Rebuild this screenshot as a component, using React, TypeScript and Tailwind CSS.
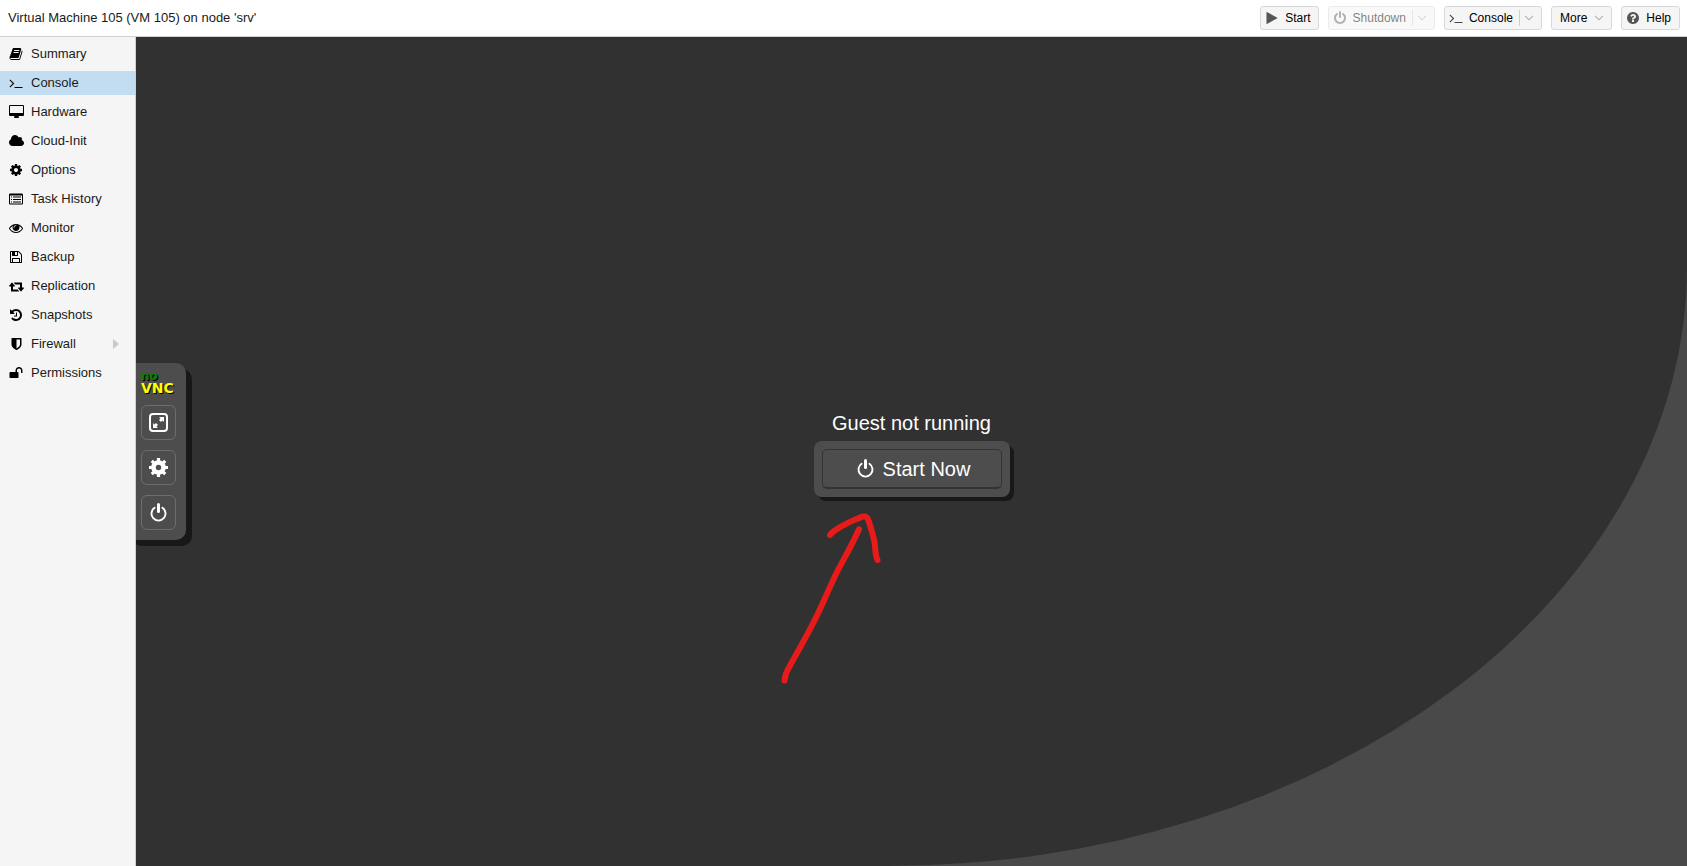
import type { ReactNode } from "react";

type IconProps = { d: string; wide?: boolean; className?: string };

const paths = {
  book: "M1703 478q40 57 18 129l-275 906q-19 64-76.5 107.5t-122.5 43.5h-923q-77 0-148.5-53.5t-99.5-131.5q-24-67-2-127 0-4 3-27t4-37q1-8-3-21.5t-3-19.5q2-11 8-21t16.500-23.500 16.500-23.500q23-38 45-91.500t30-91.500q3-10 .5-30t-.5-28q3-11 17-28t17-23q21-36 42-92t25-90q1-9-2.500-32t.5-28q4-13 22-30.500t22-22.500q19-26 42.500-84.500t27.500-96.500q1-8-3-25.500t-2-26.500q2-8 9-18t18-23 17-21q8-12 16.500-30.500t15-35 16-36 19.500-32 26.500-23.500 36-11.500 47.500 5.500l-1 3q38-9 51-9h761q74 0 114 56t18 130l-274 906q-36 119-71.500 153.500t-128.500 34.500h-869q-27 0-38 15-11 16-1 43 24 70 144 70h923q29 0 56-15.500t35-41.500l300-987q7-22 5-57 38 15 59 43zm-1064 2q-4 13 2 22.500t20 9.500h608q13 0 25.500-9.500t16.500-22.500l21-64q4-13-2-22.500t-20-9.500h-608q-13 0-25.500 9.500t-16.500 22.500zm-83 256q-4 13 2 22.500t20 9.500h608q13 0 25.500-9.500t16.500-22.500l21-64q4-13-2-22.500t-20-9.500h-608q-13 0-25.500 9.500t-16.500 22.500z",
  terminal:
    "M649 983l-466 466q-10 10-23 10t-23-10l-50-50q-10-10-10-23t10-23l393-393-393-393q-10-10-10-23t10-23l50-50q10-10 23-10t23 10l466 466q10 10 10 23t-10 23zm1079 457v64q0 14-9 23t-23 9h-960q-14 0-23-9t-9-23v-64q0-14 9-23t23-9h960q14 0 23 9t9 23z",
  desktop:
    "M1728 992v-832q0-13-9.5-22.5t-22.5-9.5h-1600q-13 0-22.5 9.5t-9.5 22.5v832q0 13 9.5 22.5t22.5 9.5h1600q13 0 22.5-9.5t9.5-22.5zm128-832v1088q0 66-47 113t-113 47h-544q0 37 16 77.5t32 71 16 43.500q0 26-19 45t-45 19h-512q-26 0-45-19t-19-45q0-14 16-44t32-70 16-78h-544q-66 0-113-47t-47-113v-1088q0-66 47-113t113-47h1600q66 0 113 47t47 113z",
  cloud:
    "M1856 1152q0 159-112.5 271.5t-271.5 112.500h-1088q-185 0-316.500-131.500t-131.500-316.500q0-132 71-241.500t187-163.500q-2-28-2-43 0-212 150-362t362-150q158 0 286.500 88t187.500 230q70-62 166-62 106 0 181 75t75 181q0 75-41 138 129 30 213 134.500t84 239.500z",
  cog: "M1152 896q0-106-75-181t-181-75-181 75-75 181 75 181 181 75 181-75 75-181zm512-109v222q0 12-8 23t-20 13l-185 28q-19 54-39 91 35 50 107 138 10 12 10 25t-9 23q-27 37-99 108t-94 71q-12 0-26-9l-138-108q-44 23-91 38-16 136-29 186-7 28-36 28h-222q-14 0-24.5-8.5t-11.5-21.5l-28-184q-49-16-90-37l-141 107q-10 9-25 9-14 0-25-11-126-114-165-168-7-10-7-23 0-12 8-23 15-21 51-66.5t54-70.5q-27-50-41-99l-183-27q-13-2-21-12.5t-8-23.5v-222q0-12 8-23t19-13l186-28q14-46 39-92-40-57-107-138-10-12-10-24 0-10 9-23 26-36 98.5-107.5t94.5-71.5q13 0 26 10l138 107q44-23 91-38 16-136 29-186 7-28 36-28h222q14 0 24.5 8.5t11.5 21.5l28 184q49 16 90 37l142-107q9-9 24-9 13 0 25 10 129 119 165 170 7 8 7 22 0 12-8 23-15 21-51 66.5t-54 70.5q26 50 41 98l183 28q13 2 21 12.5t8 23.5z",
  list: "M160 192h1472q66 0 113 47t47 113v1088q0 66-47 113t-113 47h-1472q-66 0-113-47t-47-113v-1088q0-66 47-113t113-47zm0 256q-32 0-32 32v960q0 32 32 32h1472q32 0 32-32v-960q0-32-32-32zM256 576h128v128h-128zM512 576h1024v128h-1024zM256 896h128v128h-128zM512 896h1024v128h-1024zM256 1216h128v128h-128zM512 1216h1024v128h-1024z",
  eye: "M1664 960q-152-236-381-353 61 104 61 225 0 185-131.5 316.5t-316.5 131.5-316.5-131.5-131.5-316.5q0-121 61-225-229 117-381 353 133 205 333.5 326.5t434.5 121.5 434.5-121.5 333.5-326.5zm-720-384q0-20-14-34t-34-14q-125 0-214.5 89.5t-89.5 214.5q0 20 14 34t34 14 34-14 14-34q0-86 61-147t147-61q20 0 34-14t14-34zm848 384q0 34-20 69-140 230-376.5 368.5t-499.5 138.5-499.5-139-376.5-368q-20-35-20-69t20-69q140-229 376.5-368t499.5-139 499.5 139 376.5 368q20 35 20 69z",
  floppy:
    "M512 1536h768v-384h-768v384zm896 0h128v-896q0-14-10-38.5t-20-34.500l-281-281q-10-10-34-20t-39-10v416q0 40-28 68t-68 28h-576q-40 0-68-28t-28-68v-416h-128v1280h128v-416q0-40 28-68t68-28h832q40 0 68 28t28 68v416zm-384-928v-320q0-13-9.5-22.500t-22.500-9.500h-192q-13 0-22.500 9.500t-9.500 22.500v320q0 13 9.500 22.500t22.500 9.500h192q13 0 22.500-9.500t9.500-22.500zm640 32v928q0 40-28 68t-68 28h-1344q-40 0-68-28t-28-68v-1344q0-40 28-68t68-28h928q40 0 88 20t76 48l280 280q28 28 48 76t20 88z",
  retweet:
    "M1216 1568q0 13-9.5 22.5t-22.5 9.500h-960q-8 0-13.500-2t-9-7-5.500-8-3-11.500-1-11.500v-600h-192q-26 0-45-19t-19-45q0-24 15-41l320-384q19-22 49-22t49 22l320 384q15 17 15 41 0 26-19 45t-45 19h-192v384h576q16 0 25 11l160 192q7 10 7 21zm640-416q0 24-15 41l-320 384q-20 23-49 23t-49-23l-320-384q-15-17-15-41 0-26 19-45t45-19h192v-384h-576q-16 0-25-12l-160-192q-7-9-7-20 0-13 9.500-22.500t22.500-9.500h960q8 0 13.500 2t9 7 5.500 8 3 11.500 1 11.500v600h192q26 0 45 19t19 45z",
  history:
    "M1664 896q0 156-61 298t-164 245-245 164-298 61q-172 0-327-72.5t-264-204.500q-7-10-6.500-22.500t8.500-20.500l137-138q10-9 25-9 16 2 23 12 73 95 179 147t225 52q104 0 198.500-40.500t163.500-109.500 109.500-163.500 40.500-198.500-40.500-198.500-109.500-163.500-163.500-109.500-198.500-40.500q-98 0-188 35.500t-160 101.500l137 138q31 30 14 69-17 40-59 40h-448q-26 0-45-19t-19-45v-448q0-42 40-59 39-17 69 14l130 129q107-101 244.500-156.500t284.500-55.500q156 0 298 61t245 164 164 245 61 298zm-640-288v448q0 14-9 23t-23 9h-320q-14 0-23-9t-9-23v-64q0-14 9-23t23-9h224v-352q0-14 9-23t23-9h64q14 0 23 9t9 23z",
  shield:
    "M1408 960v-640h-448v1137q119-63 213-137 235-184 235-360zm192-768v768q0 86-33.5 170.5t-83 150-118 127.500-126.500 103-121 77.500-89.500 49.500-42.500 20q-12 6-26 6t-26-6q-16-7-42.500-20t-89.500-49.500-121-77.500-126.500-103-118-127.500-83-150-33.500-170.500v-768q0-26 19-45t45-19h1152q26 0 45 19t19 45z",
  unlock:
    "M1728 576v256q0 26-19 45t-45 19h-64q-26 0-45-19t-19-45v-256q0-106-75-181t-181-75-181 75-75 181v192h96q40 0 68 28t28 68v576q0 40-28 68t-68 28h-960q-40 0-68-28t-28-68v-576q0-40 28-68t68-28h672v-192q0-185 131.5-316.5t316.5-131.5 316.5 131.5 131.5 316.5z",
  power:
    "M1664 896q0 156-61 298t-164 245-245 164-298 61-298-61-245-164-164-245-61-298q0-182 80.5-343t226.5-270q43-32 95.500-25t83.500 50q32 42 24.500 94.500t-49.500 84.500q-98 74-151.500 181t-53.500 228q0 104 40.500 198.500t109.500 163.500 163.500 109.500 198.500 40.500 198.500-40.500 163.500-109.500 109.500-163.500 40.500-198.500q0-121-53.500-228t-151.500-181q-42-32-49.500-84.500t24.500-94.500q31-43 84-50t95 25q146 109 226.500 270t80.500 343zm-640-768v640q0 52-38 90t-90 38-90-38-38-90v-640q0-52 38-90t90-38 90 38 38 90z",
  play: "M1576 927l-1328 738q-23 13-39.5 3t-16.500-36v-1472q0-26 16.500-36t39.500 3l1328 738q23 13 23 31t-23 31z",
  question:
    "M1024 1376v-192q0-14-9-23t-23-9h-192q-14 0-23 9t-9 23v192q0 14 9 23t23 9h192q14 0 23-9t9-23zm256-672q0-88-55.5-163t-138.5-116-170-41q-243 0-371 213-15 24 8 42l132 100q7 6 19 6 16 0 25-12 53-68 86-92 34-24 86-24 48 0 85.5 26t37.500 59q0 38-20 61t-68 45q-63 28-115.500 86.500t-52.500 125.500v36q0 14 9 23t23 9h192q14 0 23-9t9-23q0-19 21.500-49.500t54.500-49.500q32-18 49-28.500t46-35 44.500-48 28-60.500 12.500-81zm384 192q0 209-103 385.500t-279.500 279.500-385.500 103-385.500-103-279.500-279.500-103-385.500 103-385.500 279.500-279.500 385.500-103 385.500 103 279.500 279.500 103 385.500z",
};

function Icon({ d, wide = false, className = "" }: IconProps) {
  return (
    <svg
      aria-hidden="true"
      viewBox={wide ? "-64 0 1920 1792" : "0 0 1792 1792"}
      className={`h-[14px] shrink-0 fill-current ${wide ? "w-[15px]" : "w-[14px]"} ${className}`}
    >
      <path fillRule="evenodd" d={d} />
    </svg>
  );
}

function Chevron() {
  return (
    <svg aria-hidden="true" viewBox="0 0 10 6" className="h-[6px] w-[10px] shrink-0 fill-none stroke-[#b0b0b0]">
      <path d="M1 .8l4 4 4-4" strokeWidth="1.1" />
    </svg>
  );
}

function SplitArrow() {
  return (
    <span className="flex items-center gap-1">
      <span className="h-4 border-l border-[#cfcfcf]" />
      <Chevron />
    </span>
  );
}

function PowerIcon({ className }: { className: string }) {
  return (
    <svg aria-hidden="true" viewBox="0 0 25 25" className={`shrink-0 ${className}`}>
      <path d="M8.6 7.8a7 7 0 1 0 7.800 0" fill="none" stroke="#fff" strokeWidth="1.9" strokeLinecap="round" />
      <path d="M12.500 4.600v7" stroke="#fff" strokeWidth="3" strokeLinecap="round" />
    </svg>
  );
}

const navItems: { label: string; d: string; wide?: boolean; sub?: boolean }[] = [
  { label: "Summary", d: paths.book },
  { label: "Console", d: paths.terminal },
  { label: "Hardware", d: paths.desktop, wide: true },
  { label: "Cloud-Init", d: paths.cloud, wide: true },
  { label: "Options", d: paths.cog },
  { label: "Task History", d: paths.list },
  { label: "Monitor", d: paths.eye },
  { label: "Backup", d: paths.floppy },
  { label: "Replication", d: paths.retweet, wide: true },
  { label: "Snapshots", d: paths.history },
  { label: "Firewall", d: paths.shield, sub: true },
  { label: "Permissions", d: paths.unlock },
];

function ToolButton({
  icon,
  label,
  disabled = false,
  className,
  children,
}: {
  icon?: ReactNode;
  label: string;
  disabled?: boolean;
  className: string;
  children?: ReactNode;
}) {
  return (
    <button
      type="button"
      disabled={disabled}
      className={`flex h-6 items-center rounded-[3px] border border-[#d8d8d8] bg-[#f5f5f5] text-[12px] leading-4 text-black disabled:opacity-50 ${className}`}
    >
      {icon}
      <span>{label}</span>
      {children}
    </button>
  );
}

const vncButton =
  "flex h-[35px] w-[35px] items-center justify-center rounded-[6px] border border-[#6d6d6d]";

export default function App() {
  return (
    <div className="flex min-h-screen flex-col bg-white font-['Liberation_Sans',Arial,sans-serif] text-[13px] leading-4 text-[#1a1a1a]">
      <header className="flex h-[37px] items-center justify-between border-b border-[#cfcfcf] pl-2 pr-[7px]">
        <h1>Virtual Machine 105 (VM 105) on node 'srv'</h1>
        <div className="flex gap-[9px]">
          <ToolButton icon={<Icon d={paths.play} className="text-[#555]" />} label="Start" className="gap-[6px] pl-1 pr-[7px]" />
          <ToolButton icon={<Icon d={paths.power} className="text-[#666]" />} label="Shutdown" disabled className="gap-[6px] pl-1 pr-[7px]">
            <SplitArrow />
          </ToolButton>
          <ToolButton icon={<Icon d={paths.terminal} className="text-[#444]" />} label="Console" className="gap-[6px] pl-1 pr-[7px]">
            <SplitArrow />
          </ToolButton>
          <ToolButton label="More" className="gap-[7px] pl-2 pr-[7px]">
            <Chevron />
          </ToolButton>
          <ToolButton icon={<Icon d={paths.question} className="text-[#555]" />} label="Help" className="gap-[6px] pl-1 pr-2" />
        </div>
      </header>

      <div className="flex flex-1">
        <nav className="w-[136px] shrink-0 border-r border-[#cfcfcf] bg-[#f5f5f5] pt-[5px]">
          <ul className="flex flex-col gap-[5px]">
            {navItems.map((item) => (
              <li key={item.label}>
                <a
                  href="#"
                  aria-current={item.label === "Console" ? "page" : undefined}
                  className={`flex h-6 items-center pl-2 pr-4 ${item.label === "Console" ? "bg-[#c2ddf2]" : ""}`}
                >
                  <span className="flex w-4 justify-center text-black">
                    <Icon d={item.d} wide={item.wide} />
                  </span>
                  <span className="ml-[7px] flex-1">{item.label}</span>
                  {item.sub && (
                    <svg aria-hidden="true" viewBox="0 0 6 10" className="h-[10px] w-[6px] fill-[#c8c8c8]">
                      <path d="M0 0l6 5-6 5z" />
                    </svg>
                  )}
                </a>
              </li>
            ))}
          </ul>
        </nav>

        <main className="relative flex flex-1 overflow-hidden bg-[#494949]">
          <div className="flex flex-1 items-center rounded-br-[800px_600px] bg-[#313131]">
            <div className="absolute -left-[10px] flex flex-col items-center gap-[10px] rounded-[10px] bg-[#4d4d4d] pt-[11px] pr-[10px] pb-[10px] pl-[15px] shadow-[6px_6px_0_#181818]">
              <div className="flex h-[21px] w-[35px] flex-col font-['DejaVu_Sans',sans-serif] font-bold [text-shadow:1px_1px_0_#000]">
                <span className="text-[12px] leading-[4px] text-[#008000]">no</span>
                <span className="text-[14px] leading-[20px] text-[#ffff00]">VNC</span>
              </div>
              <button type="button" aria-label="Fullscreen" className={vncButton}>
                <svg aria-hidden="true" viewBox="0 0 25 25" className="h-[25px] w-[25px]">
                  <rect x="4" y="4" width="17" height="17" rx="3" fill="none" stroke="#fff" strokeWidth="2" />
                  <path d="M13 7h5v5l-1.500-1.500-1.500 1.500-2-2 1.500-1.500zM12 18h-5v-5l1.500 1.500 1.500-1.500 2 2-1.500 1.500z" fill="#fff" />
                </svg>
              </button>
              <button type="button" aria-label="Settings" className={vncButton}>
                <svg aria-hidden="true" viewBox="0 0 25 25" className="h-[25px] w-[25px]">
                  <circle cx="12.500" cy="12.500" r="5" fill="none" stroke="#fff" strokeWidth="4.600" />
                  <path
                    d="M12.500 3v3M12.500 19v3M3 12.500h3M19 12.500h3M5.800 5.800l2 2M17.200 17.200l2 2M5.800 19.200l2-2M17.200 7.800l2-2"
                    stroke="#fff"
                    strokeWidth="3.200"
                  />
                </svg>
              </button>
              <button type="button" aria-label="Power" className={vncButton}>
                <PowerIcon className="h-[25px] w-[25px]" />
              </button>
            </div>

            <div className="mx-auto flex flex-col items-center text-[20px] text-white">
              <p className="leading-[35px]">Guest not running</p>
              <div className="rounded-[8px] bg-[#4d4d4d] p-2 shadow-[4px_4px_0_#181818]">
                <button
                  type="button"
                  className="flex h-10 w-[180px] items-center justify-center gap-[5px] rounded-[5px] border border-b-2 border-[#333] leading-6"
                >
                  <PowerIcon className="h-[25px] w-[25px]" />
                  <span>Start Now</span>
                </button>
              </div>
            </div>
          </div>

          <svg
            aria-hidden="true"
            viewBox="0 0 110 180"
            className="pointer-events-none absolute top-[473px] left-[calc(50%-135px)] h-[180px] w-[110px] fill-none stroke-[#e81b1b]"
            strokeWidth="6"
            strokeLinecap="round"
            strokeLinejoin="round"
          >
            <path d="M7.500 170.500C8 165 9 162 12.500 156.500C21 141 31 124 40 105.500C47 91 53 76 61 60C68 47 76 33 82 19.300" />
            <path d="M53 25C56 21 60 19 66 15.500C74 11 80 9 85 6.700C88 6 90 7 91 9C94 18 96 25 97.500 32C98.500 38 98 45 100.500 50" />
          </svg>
        </main>
      </div>
    </div>
  );
}
